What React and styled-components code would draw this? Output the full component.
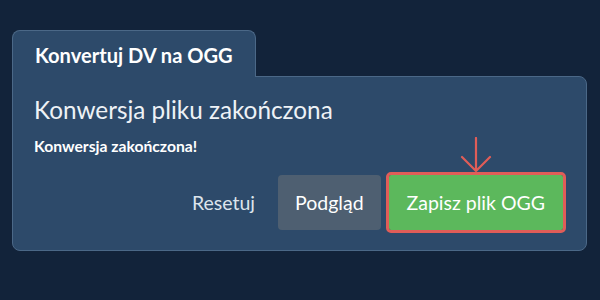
import React from "react";
import styled, { createGlobalStyle } from "styled-components";

const Global = createGlobalStyle`
  html, body { margin: 0; padding: 0; background: #12233a; }
  body { font-family: Lato, "Open Sans", sans-serif; width: 600px; height: 300px; overflow: hidden; }
`;

const Wrap = styled.div`
  padding: 30px 13px 0 12px;
  display: flex;
  flex-direction: column;
  align-items: flex-start;
`;

const Tab = styled.div`
  position: relative;
  z-index: 1;
  box-sizing: border-box;
  width: 244px;
  height: 47px;
  margin-bottom: -1px;
  padding: 12px 0 0 22px;
  background: #2d4a6a;
  border: 1px solid #4b6887;
  border-bottom: none;
  border-radius: 8px 8px 0 0;
  color: #ffffff;
  font-weight: 700;
  font-size: 20.1px;
  line-height: 24px;
`;

const Panel = styled.div`
  box-sizing: border-box;
  width: 575px;
  height: 175px;
  background: #2d4a6a;
  border: 1px solid #4b6887;
  border-radius: 0 8px 8px 8px;
  padding: 18px 22px 20px 21px;
  display: flex;
  flex-direction: column;
`;

const Heading = styled.h2`
  margin: 0;
  font-size: 24.3px;
  font-weight: 400;
  color: #eef2f6;
  line-height: 30px;
`;

const Sub = styled.p`
  margin: 12px 0 0;
  font-size: 15.7px;
  line-height: 19px;
  font-weight: 700;
  color: #ffffff;
`;

const Actions = styled.div`
  margin-top: auto;
  display: flex;
  justify-content: flex-end;
  align-items: center;
  gap: 8px;
`;

const Btn = styled.button`
  font-family: Lato, sans-serif;
  font-size: 19.5px;
  height: 55px;
  border: none;
  border-radius: 4px;
  padding: 0 ${(p) => p.$pad || 18}px;
  cursor: pointer;
  color: ${(p) => (p.$variant === "ghost" ? "#dce4ec" : "#ffffff")};
  background: ${(p) =>
    p.$variant === "primary" ? "#5cb85c" : p.$variant === "secondary" ? "#4e5f71" : "transparent"};
  ${(p) => p.$highlight && `outline: 3px solid #e05d58; outline-offset: 0; border-radius: 2px;`}
`;

const Highlight = styled.div`
  position: relative;
  display: flex;
  margin-right: 1px;
`;

const Arrow = styled.svg`
  position: absolute;
  left: 50%;
  top: -38px;
  transform: translateX(-50%);
`;

export default function App() {
  return (
    <>
      <Global />
      <Wrap>
        <Tab>Konvertuj DV na OGG</Tab>
        <Panel>
          <Heading>Konwersja pliku zakończona</Heading>
          <Sub>Konwersja zakończona!</Sub>
          <Actions>
            <Btn $variant="ghost" $pad={15}>Resetuj</Btn>
            <Btn $variant="secondary" $pad={17}>Podgląd</Btn>
            <Highlight>
              <Arrow width="32" height="36" viewBox="0 0 32 36">
                <path d="M16 1 V34 M2 20 L16 34 L30 20" fill="none" stroke="#e05d58" strokeWidth="2.2" strokeLinecap="round" strokeLinejoin="round" />
              </Arrow>
              <Btn $variant="primary" $highlight $pad={18}>Zapisz plik OGG</Btn>
            </Highlight>
          </Actions>
        </Panel>
      </Wrap>
    </>
  );
}
